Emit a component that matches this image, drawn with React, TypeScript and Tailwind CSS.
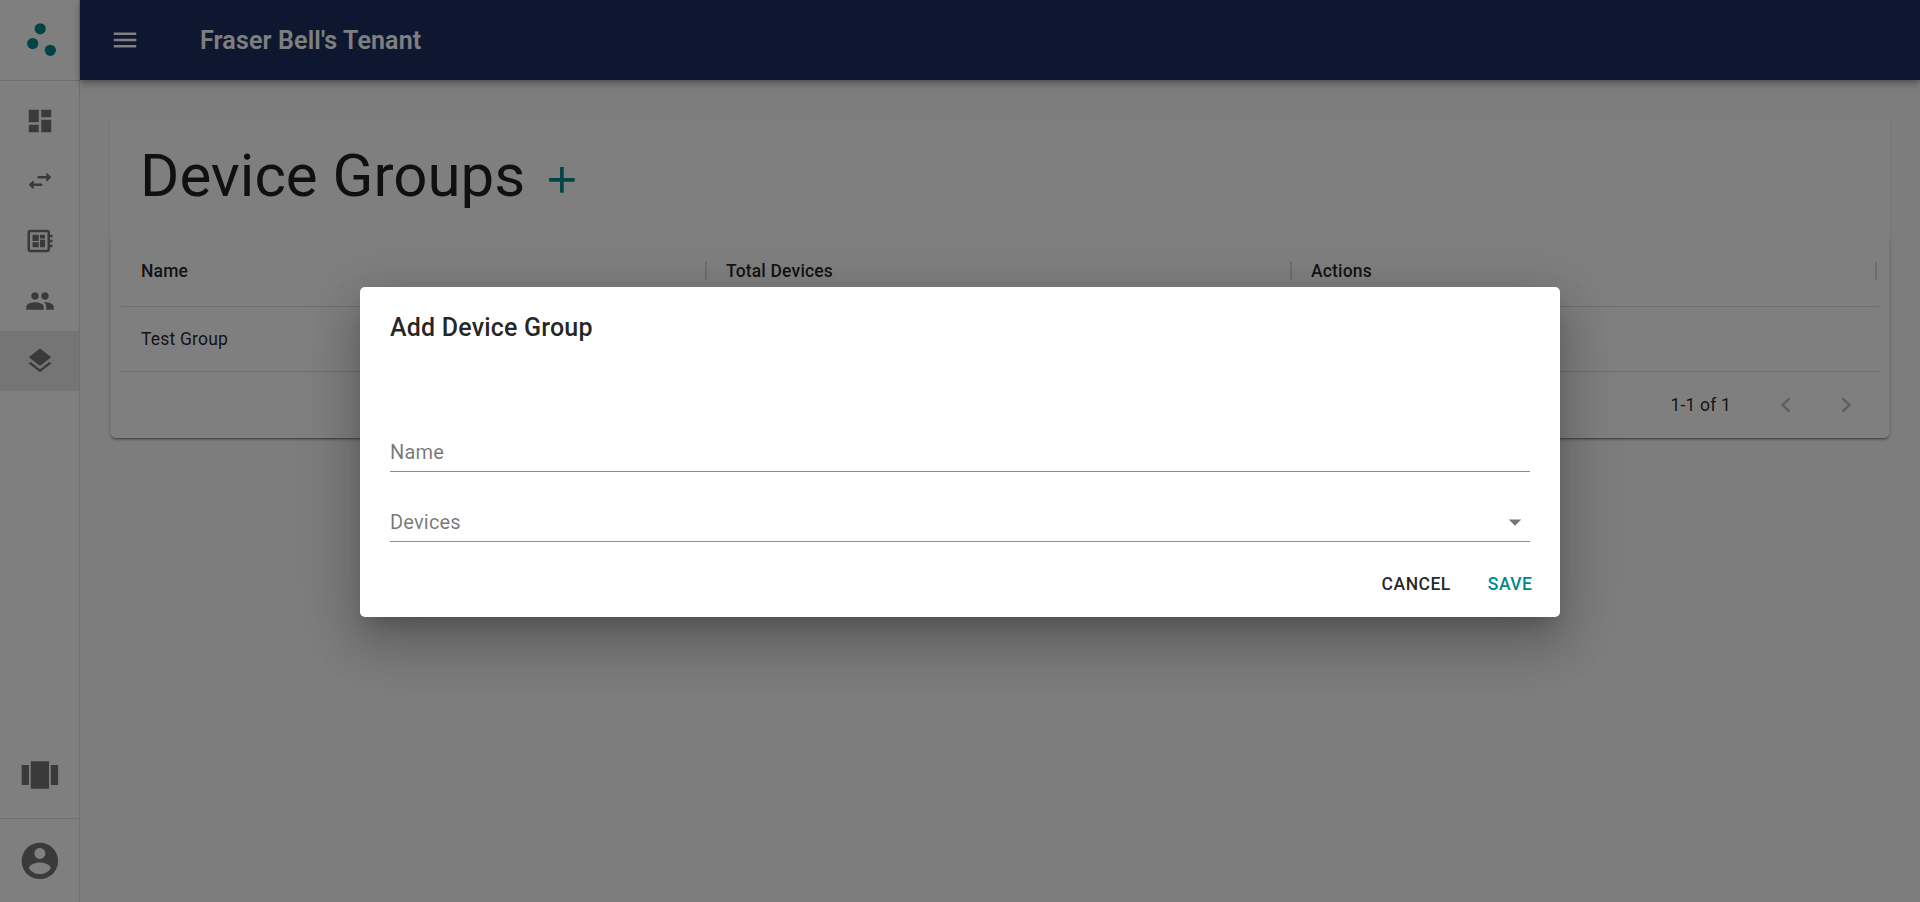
import type { ReactNode } from "react";
import {
  MdAdd,
  MdArrowDropDown,
  MdChevronLeft,
  MdChevronRight,
  MdDashboard,
  MdLayers,
  MdMenu,
  MdOutlineDeveloperBoard,
} from "react-icons/md";

const SWAP =
  "M6.14 11.86l-2.78 2.79c-.19.2-.19.51 0 .71l2.78 2.79c.31.32.85.09.85-.36V16H13c.55 0 1-.45 1-1s-.45-1-1-1H6.99v-1.79c0-.45-.54-.67-.85-.35zm14.51-3.21l-2.78-2.79c-.31-.32-.85-.09-.85.35V8H11c-.55 0-1 .45-1 1s.45 1 1 1h6.01v1.79c0 .45.54.67.85.35l2.78-2.79c.2-.19.2-.51.01-.7z";
const PEOPLE =
  "M16 11c1.66 0 2.99-1.34 2.99-3S17.66 5 16 5c-1.66 0-3 1.34-3 3s1.34 3 3 3zm-8 0c1.66 0 2.99-1.34 2.99-3S9.66 5 8 5C6.34 5 5 6.34 5 8s1.34 3 3 3zm0 2c-2.33 0-7 1.17-7 3.5V19h14v-2.5c0-2.33-4.67-3.5-7-3.5zm8 0c-.29 0-.62.02-.97.05 1.16.84 1.97 1.97 1.97 3.45V19h6v-2.5c0-2.33-4.67-3.5-7-3.5z";
const CAROUSEL = "M7 19h10V4H7v15zm-5-2h4V6H2v11zM18 6v11h4V6h-4z";
const ACCOUNT =
  "M12 2C6.48 2 2 6.48 2 12s4.48 10 10 10 10-4.48 10-10S17.52 2 12 2zm0 3c1.66 0 3 1.34 3 3s-1.34 3-3 3-3-1.34-3-3 1.34-3 3-3zm0 14.2c-2.5 0-4.71-1.28-6-3.22.03-1.99 4-3.08 6-3.08 1.99 0 5.97 1.09 6 3.08-1.29 1.94-3.5 3.22-6 3.22z";

function Glyph({ d, className }: { d: string; className: string }) {
  return (
    <svg viewBox="0 0 24 24" fill="currentColor" className={className}>
      <path d={d} />
    </svg>
  );
}

function NavItem({ children, selected = false }: { children: ReactNode; selected?: boolean }) {
  return (
    <a
      className={
        selected
          ? "flex h-[60px] items-center justify-center bg-black/8 pl-px text-[30px]"
          : "flex h-[60px] items-center justify-center pl-px text-[30px]"
      }
    >
      {children}
    </a>
  );
}

function Sidebar() {
  return (
    <nav className="flex w-20 shrink-0 flex-col border-r border-black/12 bg-white text-[#757575]">
      <div className="h-[81px] border-b border-black/12">
        <svg viewBox="0 0 79 80" className="h-20 w-[79px]" fill="#00898c">
          <circle cx="40.2" cy="28.8" r="5.6" />
          <circle cx="32.7" cy="43.5" r="5.6" />
          <circle cx="50.3" cy="50.3" r="5.6" />
        </svg>
      </div>
      <div className="flex flex-1 flex-col pt-2.5">
        <NavItem><MdDashboard /></NavItem>
        <NavItem><Glyph d={SWAP} className="size-[30px]" /></NavItem>
        <NavItem><MdOutlineDeveloperBoard /></NavItem>
        <NavItem><Glyph d={PEOPLE} className="size-[30px]" /></NavItem>
        <NavItem selected><MdLayers /></NavItem>
      </div>
      <div className="flex h-[88px] justify-center pt-[24px]">
        <Glyph d={CAROUSEL} className="size-[43.75px]" />
      </div>
      <div className="flex h-[84px] justify-center border-t border-black/12 pt-5">
        <Glyph d={ACCOUNT} className="size-[43.75px]" />
      </div>
    </nav>
  );
}

function AppBar() {
  return (
    <header className="relative flex h-20 shrink-0 items-center bg-[#1b2f5f] pl-[30px] text-white shadow-[0_2px_5px_-1px_rgba(0,0,0,0.2),0_5px_6px_0_rgba(0,0,0,0.14),0_1px_12px_0_rgba(0,0,0,0.12)]">
      <MdMenu className="size-[30px]" />
      <h1 className="ml-[60px] pt-0.5 text-[25px] font-semibold leading-10 tracking-[0.16px]">
        Fraser Bell's Tenant
      </h1>
    </header>
  );
}

function HeaderCell({ label }: { label: string }) {
  return (
    <div className="flex h-[69px] items-center justify-between pl-5 font-medium tracking-[0.17px]">
      <span className="-mt-[3px]">{label}</span>
      <span className="-mr-px -mt-[3px] h-[18px] w-0.5 bg-[#dadada]" />
    </div>
  );
}

function GroupsCard() {
  return (
    <section className="mx-[30px] mt-10 h-[318px] rounded-[5px] bg-white px-px text-black/87 shadow-[0_1px_3px_rgba(0,0,0,0.12)]">
      <div className="relative flex h-[118px] items-start bg-white pl-[29px] pt-[21px]">
        <h2 className="text-[60px] leading-[70px]">Device Groups</h2>
        <MdAdd className="ml-[15px] mt-[17px] size-[43.75px] text-[#00898c]" />
      </div>
      <div className="h-[200px] rounded-[5px] bg-white px-2.5 text-[17.5px] shadow-[0_3px_1px_-2px_rgba(0,0,0,0.2),0_2px_2px_0_rgba(0,0,0,0.14),0_1px_5px_0_rgba(0,0,0,0.12)]">
        <div className="grid h-[69px] grid-cols-[585px_585px_585px] border-b border-[#e0e0e0]">
          <HeaderCell label="Name" />
          <HeaderCell label="Total Devices" />
          <HeaderCell label="Actions" />
        </div>
        <div className="grid h-[65px] grid-cols-[585px_585px_585px] items-center border-b border-[#e0e0e0] tracking-[0.19px]">
          <span className="pl-5">Test Group</span>
          <span className="pl-5">0</span>
        </div>
        <div className="flex h-[66px] items-center justify-end pr-[18px]">
          <span className="tracking-[0.19px]">1-1 of 1</span>
          <MdChevronLeft className="ml-10 size-[30px] text-black/26" />
          <MdChevronRight className="ml-[30px] size-[30px] text-black/26" />
        </div>
      </div>
    </section>
  );
}

function Field({ label, select = false }: { label: string; select?: boolean }) {
  return (
    <div className="flex h-10 items-center justify-between border-b border-[#8c8c8c] text-[20px] tracking-[0.19px] text-black/54">
      <span>{label}</span>
      {select && <MdArrowDropDown className="size-[30px]" />}
    </div>
  );
}

function AddGroupDialog() {
  return (
    <div className="absolute inset-0 flex items-center justify-center bg-black/50 pt-0.5">
      <div className="flex h-[330px] w-[1200px] flex-col rounded-[5px] bg-white text-black/87 shadow-[0_14px_19px_-9px_rgba(0,0,0,0.2),0_30px_48px_4px_rgba(0,0,0,0.14),0_11px_58px_10px_rgba(0,0,0,0.12)]">
        <h2 className="px-[30px] pt-[21px] text-[25px] font-medium leading-10 tracking-[0.19px]">
          Add Device Group
        </h2>
        <div className="flex flex-col gap-[30px] px-[30px] pt-[84px]">
          <Field label="Name" />
          <Field label="Devices" select />
        </div>
        <div className="flex justify-end gap-[37px] pr-[27.5px] pt-[27px] text-[17.5px] font-medium leading-[31px] tracking-[0.5px]">
          <button>CANCEL</button>
          <button className="text-[#00898c]">SAVE</button>
        </div>
      </div>
    </div>
  );
}

export default function App() {
  return (
    <div className="relative flex h-[902px] w-full overflow-hidden bg-[#fafafa] font-[Roboto,sans-serif]">
      <Sidebar />
      <main className="flex flex-1 flex-col">
        <AppBar />
        <GroupsCard />
      </main>
      <AddGroupDialog />
    </div>
  );
}
